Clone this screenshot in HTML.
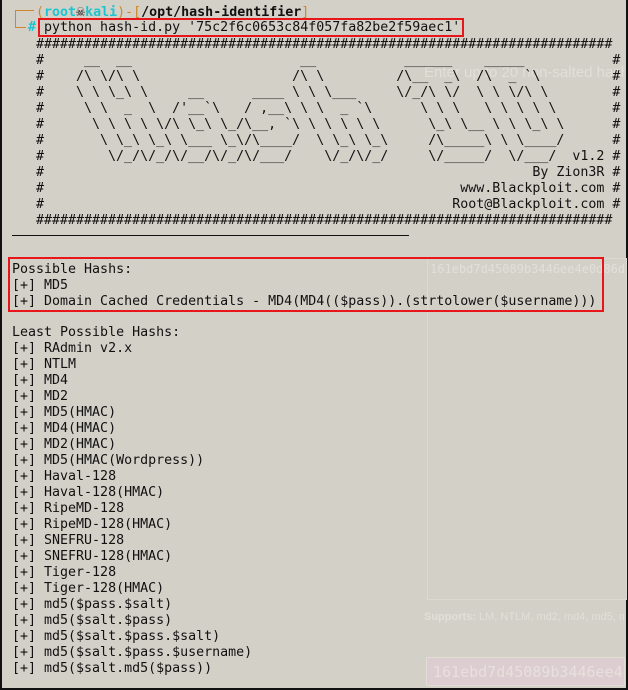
<!DOCTYPE html>
<html><head><meta charset="utf-8"><style>
html,body{margin:0;padding:0}
body{width:628px;height:690px;background:#d3d0c8;position:relative;overflow:hidden;font-family:"DejaVu Sans Mono","Liberation Mono",monospace;font-size:13.3px;color:#111}
.l{position:absolute;white-space:pre;line-height:16px}
.c{color:#1cc5cf;font-weight:bold}
.o{color:#d0862a}
.b{font-weight:bold;color:#111}
.box{position:absolute;border:2px solid #e8161a;box-sizing:border-box}
.ghost{position:absolute;color:#e2dfd8;font-family:"Liberation Sans",sans-serif;white-space:pre;overflow:hidden}
</style></head><body>
<div style="position:absolute;left:0;top:0;width:2px;height:690px;background:#111"></div>
<div style="position:absolute;left:626px;top:0;width:2px;height:690px;background:#111"></div>
<div style="position:absolute;left:0;top:688px;width:628px;height:2px;background:#111"></div>

<div style="position:absolute;left:427px;top:258px;width:198px;height:340px;border:1px solid #dcd9d2"></div>
<div class="ghost" style="left:424px;top:64px;width:200px;font-size:15px">Enter up to 20 non-salted hashes</div>
<div class="ghost" style="left:430px;top:262px;width:194px;font-size:12px;font-family:'DejaVu Sans Mono',monospace">161ebd7d45089b3446ee4e0d86d</div>
<div class="ghost" style="left:424px;top:611px;width:200px;font-size:11px"><b>Supports:</b> LM, NTLM, md2, md4, md5, md</div>
<div style="position:absolute;left:426px;top:657px;width:199px;height:29px;background:#dccdd0;border:1px solid #e2dcd6;box-sizing:border-box"></div>
<div class="ghost" style="left:433px;top:663px;width:190px;font-size:15px;color:#e8e0dc;font-family:'DejaVu Sans Mono',monospace">161ebd7d45089b3446ee4e0d</div>

<div style="position:absolute;left:15px;top:10px;width:1px;height:18px;background:#d0862a"></div>
<div style="position:absolute;left:15px;top:10px;width:19px;height:1px;background:#d0862a"></div>
<div style="position:absolute;left:15px;top:27px;width:11px;height:1px;background:#d0862a"></div>
<div class="l" style="left:36px;top:3px"><span class="o">(</span><span class="c">root</span><span style="font-size:15px">☠</span><span class="c">kali</span><span class="o">)-[</span><span class="b">/opt/hash-identifier</span><span class="o">]</span></div>
<div class="l" style="left:28px;top:20px"><span class="c">#</span> python hash-id.py '75c2f6c0653c84f057fa82be2f59aec1'</div>
<div class="box" style="left:38px;top:18px;width:426px;height:19px"></div>

<div class="l" style="left:36px;top:37px">########################################################################
#     __  __                     __           ______    _____           #
#    /\ \/\ \                   /\ \         /\__  _\  /\  _ `\         #
#    \ \ \_\ \     __      ____ \ \ \___     \/_/\ \/  \ \ \/\ \        #
#     \ \  _  \  /'__`\   / ,__\ \ \  _ `\      \ \ \   \ \ \ \ \       #
#      \ \ \ \ \/\ \_\ \_/\__, `\ \ \ \ \ \      \_\ \__ \ \ \_\ \      #
#       \ \_\ \_\ \___ \_\/\____/  \ \_\ \_\     /\_____\ \ \____/      #
#        \/_/\/_/\/__/\/_/\/___/    \/_/\/_/     \/_____/  \/___/  v1.2 #
#                                                             By Zion3R #
#                                                    www.Blackploit.com #
#                                                   Root@Blackploit.com #
########################################################################</div>
<div style="position:absolute;left:12px;top:235px;width:397px;height:1px;background:#111"></div>

<div class="l" style="left:12px;top:262px">Possible Hashs:
[+] MD5
[+] Domain Cached Credentials - MD4(MD4(($pass)).(strtolower($username)))</div>
<div class="box" style="left:8px;top:257px;width:596px;height:55px"></div>

<div class="l" style="left:12px;top:325px">Least Possible Hashs:
[+] RAdmin v2.x
[+] NTLM
[+] MD4
[+] MD2
[+] MD5(HMAC)
[+] MD4(HMAC)
[+] MD2(HMAC)
[+] MD5(HMAC(Wordpress))
[+] Haval-128
[+] Haval-128(HMAC)
[+] RipeMD-128
[+] RipeMD-128(HMAC)
[+] SNEFRU-128
[+] SNEFRU-128(HMAC)
[+] Tiger-128
[+] Tiger-128(HMAC)
[+] md5($pass.$salt)
[+] md5($salt.$pass)
[+] md5($salt.$pass.$salt)
[+] md5($salt.$pass.$username)
[+] md5($salt.md5($pass))</div>
</body></html>
